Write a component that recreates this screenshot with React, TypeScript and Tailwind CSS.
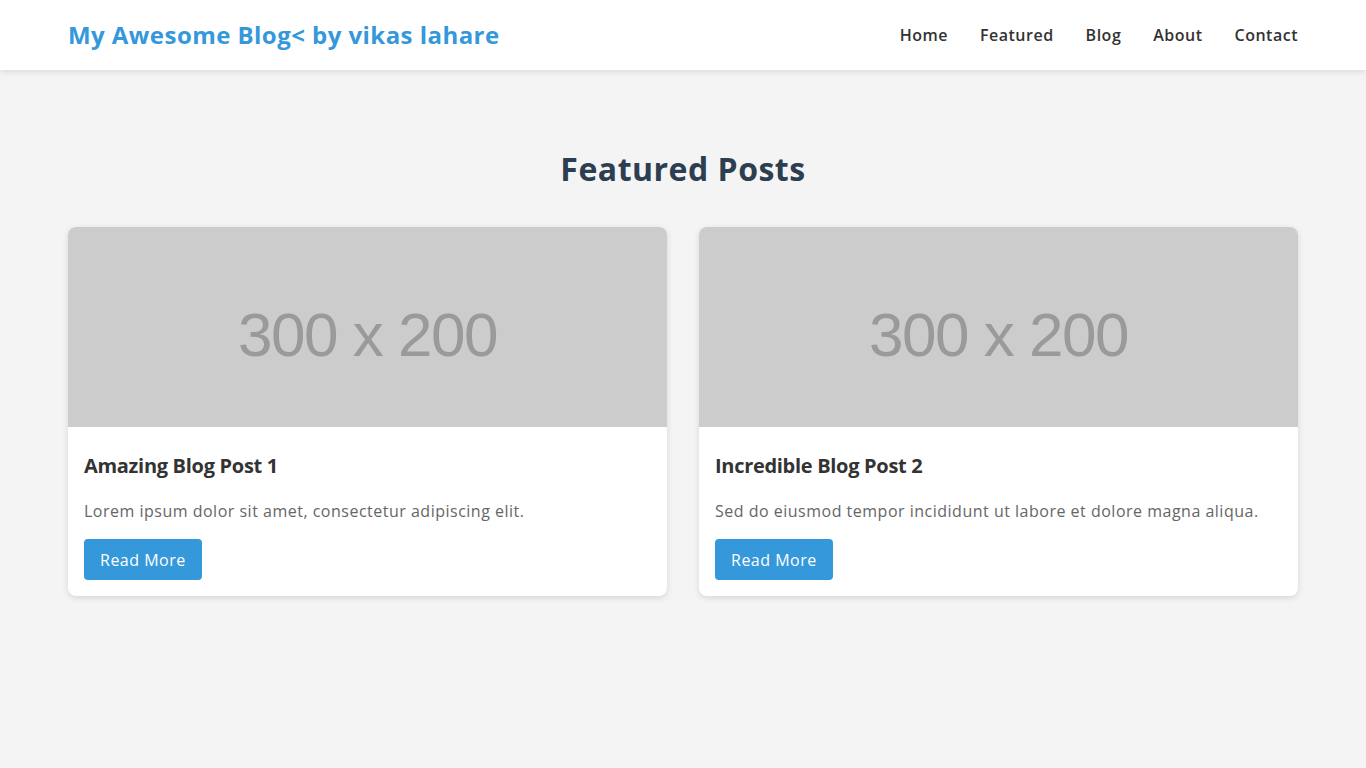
const posts = [
  {
    title: "Amazing Blog Post 1",
    text: "Lorem ipsum dolor sit amet, consectetur adipiscing elit.",
  },
  {
    title: "Incredible Blog Post 2",
    text: "Sed do eiusmod tempor incididunt ut labore et dolore magna aliqua.",
  },
];

const links = ["Home", "Featured", "Blog", "About", "Contact"];

function PostCard({ title, text }: { title: string; text: string }) {
  return (
    <div className="bg-white rounded-lg overflow-hidden shadow-[0_2px_6px_rgba(0,0,0,0.12)]">
      <div className="h-[200px] bg-[#cccccc] flex items-center justify-center">
        <span className="font-['Liberation_Sans',Arial,sans-serif] text-[62px] tracking-[-1.5px] text-[#9a9a9a] blur-[0.7px] mt-[14px]">
          300 x 200
        </span>
      </div>
      <div className="px-4 pt-6 pb-4">
        <h3 className="text-[20px] leading-[30px] font-bold text-[#333] tracking-[-0.3px]">{title}</h3>
        <p className="mt-[18px] text-[16px] leading-[24px] text-[#666] tracking-[0.5px]">{text}</p>
        <button className="mt-4 h-[41px] px-4 rounded bg-[#3498db] text-white text-[16px] tracking-[0.5px]">
          Read More
        </button>
      </div>
    </div>
  );
}

export default function App() {
  return (
    <div className="min-h-screen bg-[#f4f4f4] font-['Open_Sans','DejaVu_Sans',sans-serif]">
      <header className="h-[70px] bg-white shadow-[0_2px_6px_rgba(0,0,0,0.1)] px-[68px] flex items-center justify-between">
        <h1 className="text-[24px] font-bold text-[#3498db] tracking-[0.45px]">My Awesome Blog&lt; by vikas lahare</h1>
        <nav className="flex gap-8">
          {links.map((l) => (
            <a key={l} href="#" className="text-[16px] font-semibold text-[#333] tracking-[0.5px]">
              {l}
            </a>
          ))}
        </nav>
      </header>
      <main className="px-[68px] pt-[80px]">
        <h2 className="text-center text-[32px] leading-[38px] font-bold text-[#2c3e50] tracking-[0.5px]">Featured Posts</h2>
        <div className="mt-[39px] grid grid-cols-2 gap-8">
          {posts.map((p) => (
            <PostCard key={p.title} {...p} />
          ))}
        </div>
      </main>
    </div>
  );
}
